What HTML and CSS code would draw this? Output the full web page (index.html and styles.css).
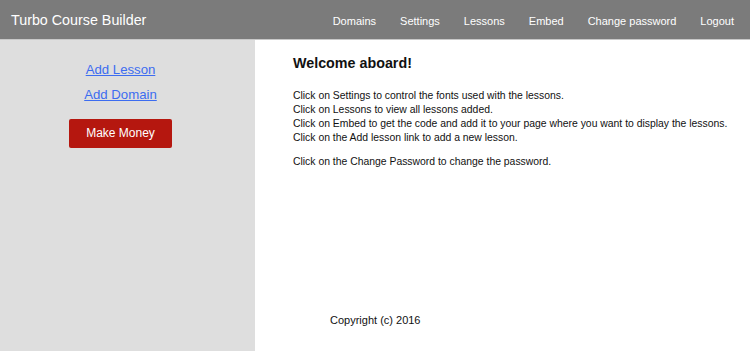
FILE: index.html
```html
<!DOCTYPE html>
<html>
<head>
<meta charset="utf-8">
<link rel="stylesheet" href="styles.css">
<title>Turbo Course Builder</title>
</head>
<body>
<div class="topbar">
  <span class="brand">Turbo Course Builder</span>
  <ul class="nav">
    <li><a href="#">Domains</a></li>
    <li><a href="#">Settings</a></li>
    <li><a href="#">Lessons</a></li>
    <li><a href="#">Embed</a></li>
    <li><a href="#">Change password</a></li>
    <li><a href="#">Logout</a></li>
  </ul>
</div>
<div class="page">
  <div class="sidebar">
    <a class="side-link" href="#">Add Lesson</a>
    <a class="side-link" href="#">Add Domain</a>
    <a class="money" href="#">Make Money</a>
  </div>
  <div class="main">
    <h1>Welcome aboard!</h1>
    <p>
    Click on Settings to control the fonts used with the lessons.<br>
    Click on Lessons to view all lessons added.<br>
    Click on Embed to get the code and add it to your page where you want to display the lessons.<br>
    Click on the Add lesson link to add a new lesson.
    </p>
    <p>Click on the Change Password to change the password.</p>
    <div class="footer">Copyright (c) 2016</div>
  </div>
</div>
</body>
</html>
```

FILE: styles.css
```css
html, body {
    height: 100%;
}

body {
    margin: 0;
    font-family: "Liberation Sans", Arial, sans-serif;
    color: #111;
    display: flex;
    flex-direction: column;
}

.topbar {
    height: 39px;
    background: #7b7b7b;
    border-bottom: 1px solid #c8c8c8;
    display: flex;
    align-items: center;
    justify-content: space-between;
    padding: 0 16px 0 11px;
    flex-shrink: 0;
}

.brand {
    color: #fff;
    font-size: 14.3px;
}

.nav {
    list-style: none;
    margin: 0;
    padding: 0;
    display: flex;
    gap: 24px;
}

.nav a {
    color: #fff;
    font-size: 11px;
    text-decoration: none;
}

.page {
    flex: 1;
    display: flex;
}

.sidebar {
    width: 241px;
    padding: 21px 14px 0 0;
    background: #dedede;
    display: flex;
    flex-direction: column;
    align-items: center;
}

.side-link {
    color: #3c6cf0;
    font-size: 13.2px;
    line-height: 18px;
    margin-bottom: 7px;
}

.money {
    margin-top: 8px;
    width: 103px;
    height: 29px;
    line-height: 29px;
    text-align: center;
    background: #b5170f;
    color: #fff;
    font-size: 12px;
    text-decoration: none;
    border-radius: 2px;
}

.main {
    flex: 1;
    padding: 14px 0 0 38px;
    display: flex;
    flex-direction: column;
}

h1 {
    font-size: 14.3px;
    margin: 0 0 17px;
    line-height: 18px;
}

p {
    font-size: 10.4px;
    line-height: 14px;
    margin: 0 0 10px;
}

.footer {
    font-size: 11px;
    margin: auto 0 0 37px;
    padding-bottom: 25px;
}
```
